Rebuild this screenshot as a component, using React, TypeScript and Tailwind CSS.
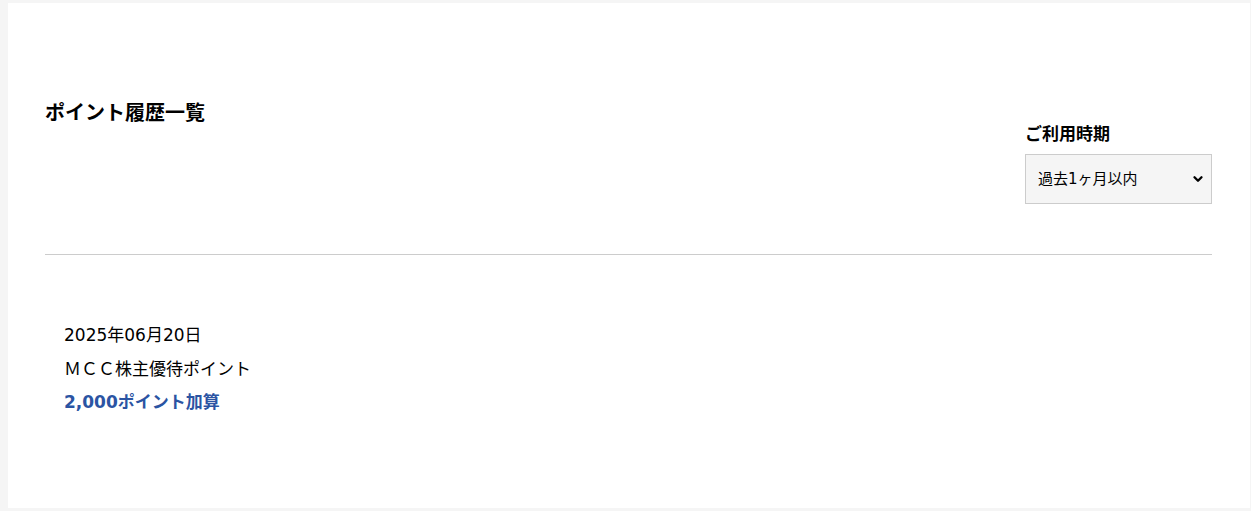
const App = () => {
  return (
    <div
      className="min-h-[511px] bg-[#f5f5f5] pt-[3px] pl-[8px] pr-[1px] pb-[3px]"
      style={{ fontFamily: '"DejaVu Sans", "Noto Sans CJK JP", sans-serif' }}
    >
      <div className="bg-white h-[505px] pl-[37px] pr-[38px] pt-[95px]">
        <div className="flex justify-between items-start">
          <h2 className="text-[20px] leading-[30px] font-bold text-black">ポイント履歴一覧</h2>
          <div className="flex flex-col pt-[23px]">
            <p className="text-[17px] leading-[26px] font-bold text-black">ご利用時期</p>
            <div className="mt-[7px] w-[187px] h-[50px] bg-[#f5f5f5] border border-[#cccccc] flex items-center justify-between pl-[12px] pr-[6px]">
              <span className="text-[15px] text-black">過去1ヶ月以内</span>
              <svg width="14" height="14" viewBox="0 0 24 24" fill="none" stroke="black" strokeWidth="4" strokeLinecap="round" strokeLinejoin="round">
                <path d="M6 9l6 6 6-6" />
              </svg>
            </div>
          </div>
        </div>

        <div className="mt-[50px] border-t border-[#cccccc]" />

        <div className="pl-[19px] pt-[63px] flex flex-col">
          <p className="text-[17px] leading-[34px] text-black">2025年06月20日</p>
          <p className="text-[17px] leading-[34px] text-black">ＭＣＣ株主優待ポイント</p>
          <p className="text-[17px] leading-[32px] font-bold text-[#2b54a3]">2,000ポイント加算</p>
        </div>
      </div>
    </div>
  )
}
export default App
